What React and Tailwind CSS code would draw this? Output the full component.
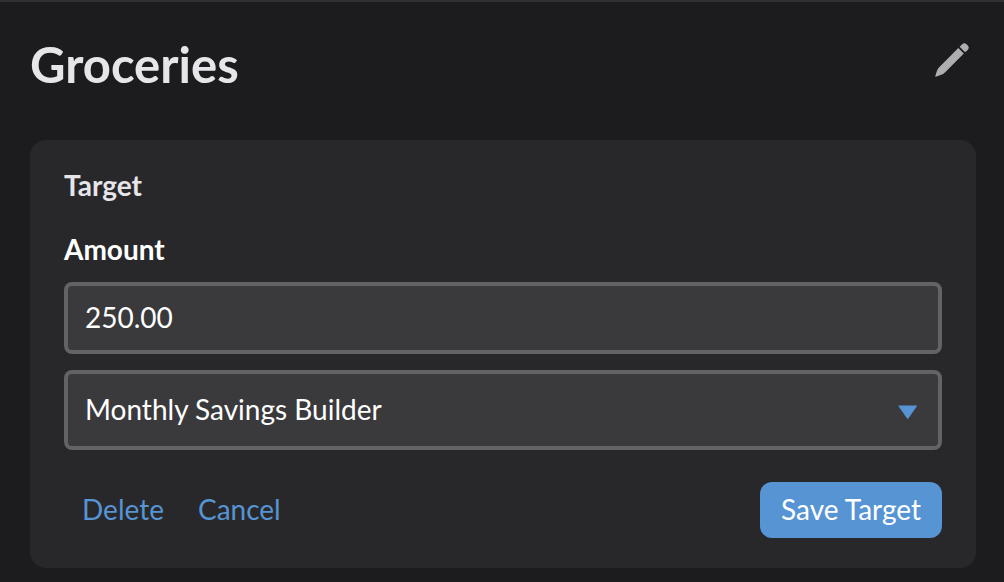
export default function App() {
  return (
    <main className="min-h-screen border-t-2 border-[#303032] bg-[#1c1c1e] px-[30px] pt-[30px] pb-[14px] font-[Lato,sans-serif] text-white">
      <header className="flex items-center justify-between pr-[5px]">
        <h1 className="text-[49px] leading-[64px] font-bold text-[#e5e5ea]">Groceries</h1>
        <button type="button" aria-label="Edit category" className="mb-2 text-[#aeaeb2]">
          <svg viewBox="0 0 34 34" className="size-[34px]" fill="currentColor">
            <path d="M23.3 5.1 28.8 10.6 10.2 29.2Q8.4 31 5.6 32.1L.9 33.7Q.1 34 .3 33.1L1.8 28.2Q2.6 25.8 4.2 24.2Z" />
            <path d="M24.6 3.8 27 1.4Q29.3-.7 31.4 1.3L32.7 2.6Q34.7 4.7 32.7 6.9L30.1 9.3Z" />
          </svg>
        </button>
      </header>
      <form className="mt-11 mr-[-2px] rounded-2xl bg-[#28282a] px-[34px] pt-[25px] pb-[30px] text-[28px]" onSubmit={(e) => e.preventDefault()}>
        <h2 className="leading-10 font-bold text-[#e5e5ea]">Target</h2>
        <label htmlFor="amount" className="mt-6 block leading-10 font-bold">Amount</label>
        <input id="amount" defaultValue="250.00" className="mt-[13px] block h-[72px] w-full rounded-lg border-4 border-[#636366] bg-[#3a3a3c] px-[17px] pb-[2px]" />
        <div className="relative mt-4">
          <select aria-label="Target type" className="block h-20 w-full appearance-none rounded-lg border-4 border-[#636366] bg-[#3a3a3c] px-[17px] pb-[2px]">
            <option>Monthly Savings Builder</option>
          </select>
          <svg viewBox="0 0 20 14" className="pointer-events-none absolute top-[35px] right-6 h-[14px] w-5" fill="#5794d3"><path d="M1 .6H18.4Q19.2.6 18.7 1.4L10.3 13.4Q9.7 14 9.1 13.4L.7 1.4Q.2.6 1 .6Z" /></svg>
        </div>
        <div className="mt-8 flex items-center justify-between">
          <div className="flex gap-[34px] pb-[2px] pl-[18px] text-[#5794d3]">
            <button type="button">Delete</button>
            <button type="button">Cancel</button>
          </div>
          <button type="submit" className="h-14 rounded-xl bg-[#5794d3] px-[21px] pb-[2px]">Save Target</button>
        </div>
      </form>
    </main>
  );
}
